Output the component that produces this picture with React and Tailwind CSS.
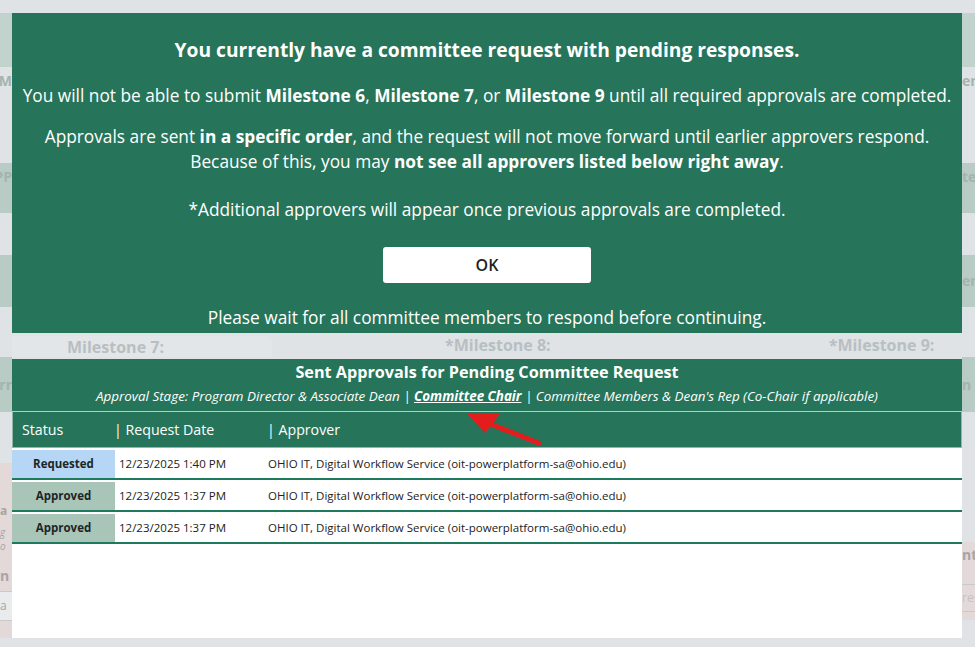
import { useState } from "react";

// faint app visible behind the dialogs, only at the left and right edges
const leftBands = [
  { h: "h-[13px]", bg: "bg-[#dfe3e5]", t: "" },
  { h: "h-[54px]", bg: "bg-[#c2d2cd]", t: "" },
  { h: "h-[96px]", bg: "bg-[#dfe3e5]", t: ": M", top: true },
  { h: "h-[50px]", bg: "bg-[#b9cbc5]", t: "PP", top: true },
  { h: "h-[42px]", bg: "bg-[#dfe3e5]", t: "" },
  { h: "h-[52px]", bg: "bg-[#b9cbc5]", t: "" },
  { h: "h-[50px]", bg: "bg-[#dfe3e5]", t: "" },
  { h: "h-[55px]", bg: "bg-[#b9cbc5]", t: "rr" },
  { h: "h-[51px]", bg: "bg-[#dfe3e5]", t: "" },
];

const rightBands = [
  { h: "h-[13px]", bg: "bg-[#dfe3e5]", t: "" },
  { h: "h-[54px]", bg: "bg-[#c2d2cd]", t: "" },
  { h: "h-[96px]", bg: "bg-[#dfe3e5]", t: "em", top: true },
  { h: "h-[50px]", bg: "bg-[#b9cbc5]", t: "ted", top: true },
  { h: "h-[42px]", bg: "bg-[#dfe3e5]", t: "" },
  { h: "h-[52px]", bg: "bg-[#b9cbc5]", t: "em" },
  { h: "h-[50px]", bg: "bg-[#dfe3e5]", t: "" },
  { h: "h-[55px]", bg: "bg-[#b9cbc5]", t: "n C" },
  { h: "h-[130px]", bg: "bg-[#dfe3e5]", t: "" },
];

const rows = [
  { status: "Requested", date: "12/23/2025 1:40 PM" },
  { status: "Approved", date: "12/23/2025 1:37 PM" },
  { status: "Approved", date: "12/23/2025 1:37 PM" },
];

function Strip({ bands, side }) {
  return (
    <div className="flex flex-col overflow-hidden">
      {bands.map((b, i) => (
        <div
          key={i}
          className={`${b.h} ${b.bg} flex ${b.top ? "items-start pt-[7px]" : "items-center"} ${
            side === "left" ? "justify-end" : "justify-start"
          } text-[14px] font-bold text-[#a3b3ae] leading-none whitespace-nowrap`}
        >
          {b.t}
        </div>
      ))}
    </div>
  );
}

function Background() {
  return (
    <div className="flex w-full h-full">
      <div className="w-[12px] flex flex-col">
        <Strip bands={leftBands} side="left" />
        <div className="h-[175px] bg-[#e3d9d8] flex flex-col text-[#a9a4a3] text-[12px] leading-none whitespace-nowrap overflow-hidden">
          <div className="mt-[42px] font-bold">a</div>
          <div className="mt-[10px] italic text-[10px]">g</div>
          <div className="mt-[4px] italic text-[10px]">o</div>
          <div className="mt-[18px] font-bold text-[14px]">n</div>
          <div className="mt-[8px] h-[30px] bg-[#e9ebec] border-y border-[#c9c9c9] flex items-center">a</div>
        </div>
        <div className="flex-1 bg-[#dfe3e5]" />
      </div>

      <div className="flex-1 flex flex-col bg-[#dfe3e5]">
        {/* milestone labels, in the gap between the two dialogs */}
        <div className="mt-[333px] h-[26px] flex items-center text-[16px] font-bold text-[#b8bfc2]">
          <div className="w-[260px] h-[21px] mt-[5px] bg-[#e3e6e8] rounded-tr-md flex items-center pl-[55px] -translate-y-[2px]">
            Milestone 7:
          </div>
          <div className="ml-[173px] -translate-y-[1px]">*Milestone 8:</div>
          <div className="ml-[278px] -translate-y-[1px]">*Milestone 9:</div>
        </div>
      </div>

      <div className="w-[13px] flex flex-col">
        <Strip bands={rightBands} side="right" />
        <div className="h-[78px] bg-[#e3d9d8] flex flex-col text-[#a9a4a3] leading-none whitespace-nowrap overflow-hidden">
          <div className="mt-[6px] font-bold text-[14px]">nt</div>
          <div className="mt-[22px] border-y border-[#c9c9c9] h-[28px] flex items-center text-[12px] text-[#c3c3c3]">res</div>
        </div>
        <div className="flex-1 bg-[#dfe3e5]" />
      </div>
    </div>
  );
}

function App() {
  const [open] = useState(true);

  return (
    <div className="relative w-[975px] h-[647px] overflow-hidden bg-[#dfe3e5] font-['Open_Sans',sans-serif]">
      <Background />

      {open && (
        <div className="absolute inset-0 flex flex-col pl-[12px] pr-[13px] pt-[13px]">
          <div className="h-[320px] bg-[#26755a] flex flex-col items-center text-white text-[17.3px] leading-[25px]">
            <h1 className="mt-[24px] text-[19.2px] font-bold">
              You currently have a committee request with pending responses.
            </h1>
            <p className="mt-[21px] whitespace-nowrap">
              You will not be able to submit <b>Milestone 6</b>, <b>Milestone 7</b>, or{" "}
              <b>Milestone 9</b> until all required approvals are completed.
            </p>
            <p className="mt-[16px] text-center whitespace-nowrap">
              Approvals are sent <b>in a specific order</b>, and the request will not move
              forward until earlier approvers respond.
              <br />
              Because of this, you may <b>not see all approvers listed below right away</b>.
            </p>
            <p className="mt-[23px]">
              *Additional approvers will appear once previous approvals are completed.
            </p>
            <button className="mt-[25px] w-[208px] h-[36px] bg-white rounded-[3px] text-[#1f1f1f] text-[16px] font-semibold">
              OK
            </button>
            <p className="mt-[22px]">
              Please wait for all committee members to respond before continuing.
            </p>
          </div>

          <div className="mt-[26px] h-[279px] bg-white flex flex-col">
            <div className="h-[53px] bg-[#26755a] flex flex-col items-center text-white border-b border-[#b6d0c4]">
              <h2 className="mt-[2px] text-[16.2px] font-bold leading-[22px]">
                Sent Approvals for Pending Committee Request
              </h2>
              <p className="mt-[2px] text-[13.4px] italic leading-[22px] whitespace-nowrap">
                Approval Stage: Program Director &amp; Associate Dean |{" "}
                <span className="font-bold underline">Committee Chair</span> | Committee
                Members &amp; Dean's Rep (Co-Chair if applicable)
              </p>
            </div>
            <div className="h-[36px] bg-[#26755a] border border-t-0 border-[#8fb8a6] flex items-center text-white text-[14.2px]">
              <div className="w-[101px] pl-[9px]">Status</div>
              <div className="w-[153px]">| Request Date</div>
              <div>| Approver</div>
            </div>
            {rows.map((r, i) => (
              <div key={i} className="pt-[2px] border-b-2 border-[#1e7a5c]">
                <div className="h-[28px] flex items-center text-[11.5px] text-[#222]">
                  <div
                    className={`w-[103px] h-full flex items-center justify-center font-bold text-[#1d2626] ${
                      r.status === "Requested" ? "bg-[#b6d6f6]" : "bg-[#a8c5b8]"
                    }`}
                  >
                    {r.status}
                  </div>
                  <div className="w-[149px] pl-[4px]">{r.date}</div>
                  <div className="pl-[4px]">
                    OHIO IT, Digital Workflow Service (oit-powerplatform-sa@ohio.edu)
                  </div>
                </div>
              </div>
            ))}
          </div>
        </div>
      )}

      {/* red annotation arrow */}
      <svg className="absolute left-0 top-0 pointer-events-none" width="975" height="647">
        <line x1="541" y1="444" x2="488" y2="423" stroke="#e31c1c" strokeWidth="5" />
        <polygon points="467,414 500,414 485,433" fill="#e31c1c" />
      </svg>
    </div>
  );
}

export default App;
